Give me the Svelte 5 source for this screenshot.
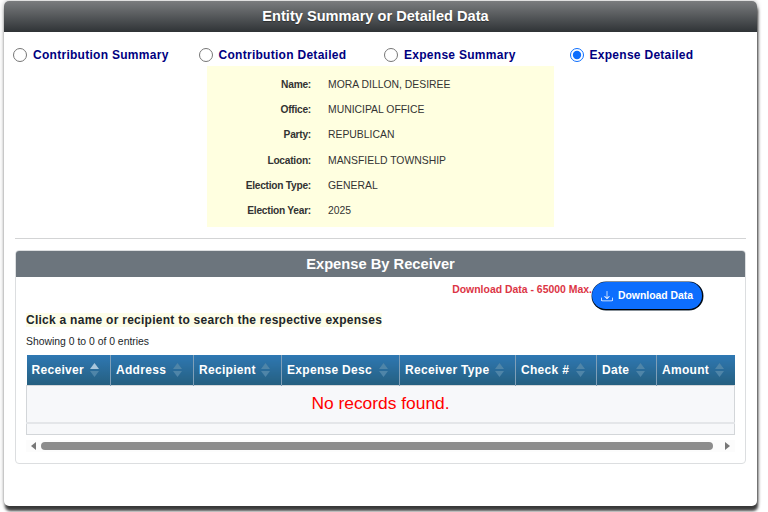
<script>
  // Entity summary modal: report type radios, entity details and the empty expense table.
  let tipo = $state("ed");
  const tipi = [
    { id: "cs", nome: "Contribution Summary" },
    { id: "cd", nome: "Contribution Detailed" },
    { id: "es", nome: "Expense Summary" },
    { id: "ed", nome: "Expense Detailed" }
  ];
  const dati = [
    ["Name:", "MORA DILLON, DESIREE"],
    ["Office:", "MUNICIPAL OFFICE"],
    ["Party:", "REPUBLICAN"],
    ["Location:", "MANSFIELD TOWNSHIP"],
    ["Election Type:", "GENERAL"],
    ["Election Year:", "2025"]
  ];
  const colonne = ["Receiver", "Address", "Recipient", "Expense Desc", "Receiver Type", "Check #", "Date", "Amount"];
</script>

<div class="pagina">
  <div class="modal">
    <div class="titolo">Entity Summary or Detailed Data</div>

    <div class="tipi">
      {#each tipi as t}
        <label class="tipo">
          <input type="radio" name="tipo" value={t.id} bind:group={tipo} />
          <span>{t.nome}</span>
        </label>
      {/each}
    </div>

    <div class="info">
      {#each dati as d}
        <div class="lab">{d[0]}</div>
        <div class="val">{d[1]}</div>
      {/each}
    </div>

    <hr />

    <div class="card">
      <div class="card-h">Expense By Receiver</div>
      <div class="card-b">
        <div class="scarica">
          <span class="max">Download Data - 65000 Max.</span>
          <button class="btn">
            <svg width="12" height="12" viewBox="0 0 16 16" fill="currentColor">
              <path d="M.5 9.9a.5.5 0 0 1 .5.5v2.5a1 1 0 0 0 1 1h12a1 1 0 0 0 1-1v-2.5a.5.5 0 0 1 1 0v2.5a2 2 0 0 1-2 2H2a2 2 0 0 1-2-2v-2.5a.5.5 0 0 1 .5-.5z" />
              <path d="M7.65 11.85a.5.5 0 0 0 .7 0l3-3a.5.5 0 0 0-.7-.7L8.5 10.29V1.5a.5.5 0 0 0-1 0v8.79L5.35 8.15a.5.5 0 1 0-.7.7l3 3z" />
            </svg>
            Download Data
          </button>
        </div>
        <div class="hint"><span>Click a name or recipient to search the respective expenses</span></div>
        <div class="conta">Showing 0 to 0 of 0 entries</div>

        <table>
          <thead>
            <tr>
              {#each colonne as c, i}
                <th>
                  <div class="th">
                    <span>{c}</span>
                    <svg class="sort" width="9" height="16" viewBox="0 0 9 16">
                      <path d="M4.5 1 L9 7 H0 Z" fill={i === 0 ? "#a9c6dc" : "#4f85a8"} />
                      <path d="M4.5 15 L9 9 H0 Z" fill="#4f85a8" />
                    </svg>
                  </div>
                </th>
              {/each}
            </tr>
          </thead>
          <tbody>
            <tr><td class="vuoto" colspan="8">No records found.</td></tr>
            <tr><td class="piede" colspan="8"></td></tr>
          </tbody>
        </table>

        <div class="scroll">
          <span class="freccia sx"></span>
          <div class="pollice"></div>
          <span class="freccia dx"></span>
        </div>
      </div>
    </div>
  </div>
</div>

<style>
  :global(body) { background: #fff; font-family: "Liberation Sans", Arial, sans-serif; }
  .pagina { height: 512px; padding: 1px 0 0 4px; box-sizing: border-box; overflow: hidden; }
  .modal { width: 753px; height: 505px; background: #fff; border-radius: 5px; box-shadow: 1px 5px 3px rgba(0,0,0,.75), 0 0 5px rgba(0,0,0,.3); overflow: hidden; box-sizing: border-box; }
  .titolo { height: 31px; line-height: 31px; padding-right: 10px; text-align: center; color: #fff; font-size: 14.6px; font-weight: 700; background: linear-gradient(#7a7c7e, #2f3336); text-shadow: 0 1px 1px rgba(0,0,0,.4); }

  .tipi { display: grid; grid-template-columns: repeat(4, 185.5px); padding: 15px 0 0 9px; height: 19px; }
  .tipo { display: flex; align-items: center; gap: 6px; height: 16px; font-size: 12px; font-weight: 700; letter-spacing: .28px; color: #00007f; cursor: pointer; }
  .tipo input { width: 14px; height: 14px; margin: 0; accent-color: #0d6efd; }

  .info { display: grid; grid-template-columns: 104px 1fr; column-gap: 17px; grid-auto-rows: 25.2px; align-items: center; width: 347px; height: 161px; box-sizing: border-box; margin: 0 0 0 203px; padding: 6px 0 0; background: #ffffe0; font-size: 10.4px; color: #333; }
  .lab { text-align: right; font-weight: 700; font-size: 10.2px; letter-spacing: -.25px; }

  hr { margin: 11px; border: 0; border-top: 1px solid #d3d4d5; }

  .card { margin: 0 11px; height: 214px; border: 1px solid #dcdee0; border-radius: 4px; box-sizing: border-box; overflow: hidden; }
  .card-h { height: 26px; line-height: 26px; text-align: center; background: #6c757d; color: #fff; font-size: 14.7px; font-weight: 700; }
  .card-b { padding: 0 10px; }

  .scarica { display: flex; justify-content: flex-end; padding: 5px 32px 0 0; height: 28px; }
  .max { color: #dc3545; font-size: 10.45px; font-weight: 700; margin-top: 2px; }
  .btn { display: flex; align-items: center; justify-content: center; gap: 5px; width: 111px; height: 28px; padding: 0; border: 0; border-bottom: 1px solid #000; border-right: 1px solid #000; box-shadow: 0 0 0 .5px #123; border-radius: 14px; background: #0d6efd; color: #fff; font: 700 10.4px "Liberation Sans", Arial, sans-serif; }

  .hint { margin-top: 3px; height: 14px; line-height: 14px; font-size: 12px; font-weight: 700; letter-spacing: .26px; color: #212529; }
  .hint span { background: #fdfde8; }
  .conta { margin-top: 8px; height: 14px; line-height: 14px; font-size: 10.4px; color: #212529; }

  table { margin-top: 6px; width: 709px; table-layout: fixed; border-collapse: collapse; }
  th { height: 30px; padding: 0; background: linear-gradient(#2f78b3, #255f80); border-left: 1px solid #7f9fb8; color: #fff; font-size: 12px; font-weight: 700; letter-spacing: .3px; text-align: left; box-sizing: border-box; }
  th:first-child { width: 84px; border-left: 0; }
  th:nth-child(2) { width: 83px; }
  th:nth-child(3) { width: 88px; }
  th:nth-child(4) { width: 118px; }
  th:nth-child(5) { width: 116px; }
  th:nth-child(6) { width: 81px; }
  th:nth-child(7) { width: 60px; }
  .th { display: flex; align-items: center; justify-content: space-between; padding: 0 11px 0 5px; }
  .sort { flex: none; }
  td { padding: 0; background: #f7f8fa; border: 1px solid #d3d6d9; }
  .vuoto { height: 36px; text-align: center; color: #f00; font-size: 17.4px; border-bottom: 2px solid #e4e6e9; }
  .piede { height: 10px; border-top: 0; }

  .scroll { display: flex; align-items: center; height: 12px; margin-top: 5px; padding: 0 5px; gap: 5px; background: #fcfcfc; }
  .pollice { flex: 1; height: 8px; margin-right: 7px; border-radius: 4px; background: #8c8c8c; }
  .freccia { width: 0; height: 0; border: 4px solid transparent; }
  .freccia.sx { border-right: 5px solid #777; border-left: 0; }
  .freccia.dx { border-left: 5px solid #777; border-right: 0; }
</style>
